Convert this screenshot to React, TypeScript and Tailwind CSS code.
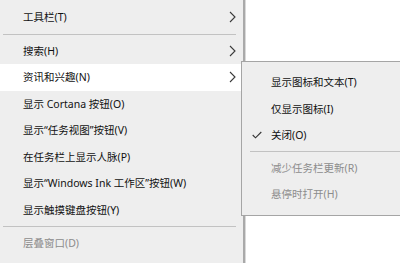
import React from "react";

const Chevron = () => (
  <svg width="7" height="12" viewBox="0 0 7 12" className="absolute left-[229px] top-1/2 -translate-y-1/2">
    <path d="M1 1 L6 6 L1 11" fill="none" stroke="#3a3a3a" strokeWidth="1.1" />
  </svg>
);

const Row = ({ label, sub, disabled, hover }: { label: string; sub?: boolean; disabled?: boolean; hover?: boolean }) => (
  <div className={`relative h-[26.5px] flex items-center pl-[23px] ${hover ? "bg-white" : ""} ${disabled ? "text-[#8c8c8c]" : "text-[#111111]"}`}>
    <span className="whitespace-pre leading-none">{label}</span>
    {sub && <Chevron />}
  </div>
);

const SubRow = ({ label, disabled, checked }: { label: string; disabled?: boolean; checked?: boolean }) => (
  <div className={`relative h-[26.6px] flex items-center pl-[29px] ${disabled ? "text-[#8c8c8c]" : "text-[#111111]"}`}>
    {checked && (
      <svg width="10" height="8" viewBox="0 0 10 8" className="absolute left-[10px] top-1/2 -translate-y-1/2">
        <path d="M0.7 4 L3.5 6.8 L9.3 1" fill="none" stroke="#333333" strokeWidth="1.1" />
      </svg>
    )}
    <span className="whitespace-pre leading-none">{label}</span>
  </div>
);

export default function App() {
  return (
    <div
      className="relative w-[400px] h-[263px] bg-white overflow-hidden flex text-[10.5px]"
      style={{ fontFamily: '"Noto Sans", "Noto Sans CJK SC", sans-serif' }}
    >
      <div className="w-[243px] h-full bg-[#eeeeee] flex flex-col pt-[4px]">
        <Row label="工具栏(T)" sub />
        <div className="h-[7px] flex items-center pl-[3px] pr-[7px]">
          <div className="h-px w-full bg-[#c2c2c2]" />
        </div>
        <Row label="搜索(H)" sub />
        <Row label="资讯和兴趣(N)" sub hover />
        <Row label="显示 Cortana 按钮(O)" />
        <Row label="显示“任务视图”按钮(V)" />
        <Row label="在任务栏上显示人脉(P)" />
        <Row label="显示“Windows Ink 工作区”按钮(W)" />
        <Row label="显示触摸键盘按钮(Y)" />
        <div className="h-[7px] flex items-center pl-[3px] pr-[7px]">
          <div className="h-px w-full bg-[#c2c2c2]" />
        </div>
        <Row label="层叠窗口(D)" disabled />
      </div>
      <div className="w-[2px] h-full bg-[#a9a9a9]" />
      <div className="w-[1px] h-full bg-[#d9d9d9]" />

      <div className="absolute left-[241px] top-[61px] w-[170px] h-[155px] bg-[#eeeeee] border border-[#a5a5a5] flex flex-col pt-[7px]">
        <SubRow label="显示图标和文本(T)" />
        <SubRow label="仅显示图标(I)" />
        <SubRow label="关闭(O)" checked />
        <div className="h-[6px] flex items-center pl-[8px]">
          <div className="h-px w-full bg-[#c2c2c2]" />
        </div>
        <SubRow label="减少任务栏更新(R)" disabled />
        <SubRow label="悬停时打开(H)" disabled />
      </div>
    </div>
  );
}
